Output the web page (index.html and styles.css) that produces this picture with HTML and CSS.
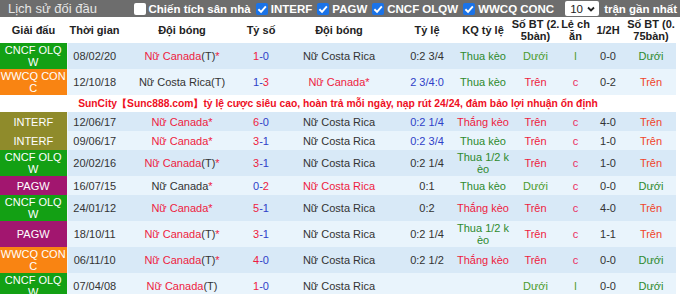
FILE: index.html
```html
<!DOCTYPE html>
<html lang="vi">
<head>
    <meta charset="UTF-8">
    <title>Lịch sử đối đầu</title>
    <link rel="stylesheet" href="styles.css">
</head>
<body>
    <div class="h2h">
        <!-- Title bar with filters -->
        <div class="title-bar">
            <span class="title">Lịch sử đối đầu</span>
            <div class="filters">
                <label class="filter"><span class="box"></span>Chiến tích sân nhà</label>
                <label class="filter"><span class="box checked"><svg viewBox="0 0 10 10"><path d="M2 5.2 L4.2 7.4 L8.2 2.8" /></svg></span>INTERF</label>
                <label class="filter"><span class="box checked"><svg viewBox="0 0 10 10"><path d="M2 5.2 L4.2 7.4 L8.2 2.8" /></svg></span>PAGW</label>
                <label class="filter"><span class="box checked"><svg viewBox="0 0 10 10"><path d="M2 5.2 L4.2 7.4 L8.2 2.8" /></svg></span>CNCF OLQW</label>
                <label class="filter"><span class="box checked"><svg viewBox="0 0 10 10"><path d="M2 5.2 L4.2 7.4 L8.2 2.8" /></svg></span>WWCQ CONC</label>
                <span class="select">10<svg viewBox="0 0 10 10"><path d="M2 3.5 L5 6.5 L8 3.5" /></svg></span>
                <span class="filter">trận gần nhất</span>
            </div>
        </div>

        <table class="matches">
            <colgroup>
                <col class="c-league">
                <col class="c-date">
                <col class="c-home">
                <col class="c-score">
                <col class="c-away">
                <col class="c-odds">
                <col class="c-result">
                <col class="c-goals">
                <col class="c-oe">
                <col class="c-half">
                <col class="c-goals2">
            </colgroup>
            <thead>
                <tr>
                    <th>Giải đấu</th>
                    <th>Thời gian</th>
                    <th>Đội bóng</th>
                    <th>Tỷ số</th>
                    <th>Đội bóng</th>
                    <th>Tỷ lệ</th>
                    <th>KQ tỷ lệ</th>
                    <th>Số BT (2.5bàn)</th>
                    <th>Lẻ chẵn</th>
                    <th>1/2H</th>
                    <th>Số BT (0.75bàn)</th>
                </tr>
            </thead>
            <tbody>
                <tr class="row-a">
                    <td class="lg cncf">CNCF OLQW</td>
                    <td>08/02/20</td>
                    <td><span class="red">Nữ Canada</span>(T)<span class="red">*</span></td>
                    <td><span class="red">1</span><span class="blue">-0</span></td>
                    <td>Nữ Costa Rica</td>
                    <td>0:2 3/4</td>
                    <td class="green">Thua kèo</td>
                    <td class="lgreen">Dưới</td>
                    <td class="lgreen">l</td>
                    <td>0-0</td>
                    <td class="green">Dưới</td>
                </tr>
                <tr class="row-b">
                    <td class="lg wwcq">WWCQ CONC</td>
                    <td>12/10/18</td>
                    <td>Nữ Costa Rica(T)</td>
                    <td><span class="blue">1-</span><span class="red">3</span></td>
                    <td class="red">Nữ Canada*</td>
                    <td class="blue">2 3/4:0</td>
                    <td class="green">Thua kèo</td>
                    <td class="red">Trên</td>
                    <td class="pink">c</td>
                    <td>0-2</td>
                    <td class="orange">Trên</td>
                </tr>
                <tr class="promo">
                    <td colspan="11">SunCity【Sunc888.com】tỷ lệ cược siêu cao, hoàn trả mỗi ngày, nạp rút 24/24, đảm bảo lợi nhuận ổn định</td>
                </tr>
                <tr class="row-a">
                    <td class="lg interf">INTERF</td>
                    <td>12/06/17</td>
                    <td class="red">Nữ Canada*</td>
                    <td><span class="red">6</span><span class="blue">-0</span></td>
                    <td>Nữ Costa Rica</td>
                    <td class="blue">0:2 1/4</td>
                    <td class="red">Thắng kèo</td>
                    <td class="red">Trên</td>
                    <td class="pink">c</td>
                    <td>4-0</td>
                    <td class="orange">Trên</td>
                </tr>
                <tr class="row-b">
                    <td class="lg interf">INTERF</td>
                    <td>09/06/17</td>
                    <td class="red">Nữ Canada*</td>
                    <td><span class="red">3</span><span class="blue">-1</span></td>
                    <td>Nữ Costa Rica</td>
                    <td class="blue">0:2 3/4</td>
                    <td class="green">Thua kèo</td>
                    <td class="red">Trên</td>
                    <td class="pink">c</td>
                    <td>1-0</td>
                    <td class="orange">Trên</td>
                </tr>
                <tr class="row-a">
                    <td class="lg cncf">CNCF OLQW</td>
                    <td>20/02/16</td>
                    <td><span class="red">Nữ Canada</span>(T)<span class="red">*</span></td>
                    <td><span class="red">3</span><span class="blue">-1</span></td>
                    <td>Nữ Costa Rica</td>
                    <td>0:2 1/4</td>
                    <td class="green">Thua 1/2 kèo</td>
                    <td class="red">Trên</td>
                    <td class="pink">c</td>
                    <td>1-0</td>
                    <td class="orange">Trên</td>
                </tr>
                <tr class="row-b">
                    <td class="lg pagw">PAGW</td>
                    <td>16/07/15</td>
                    <td>Nữ Canada<span class="red">*</span></td>
                    <td><span class="blue">0-</span><span class="red">2</span></td>
                    <td class="red">Nữ Costa Rica</td>
                    <td>0:1</td>
                    <td class="green">Thua kèo</td>
                    <td class="lgreen">Dưới</td>
                    <td class="pink">c</td>
                    <td>0-0</td>
                    <td class="green">Dưới</td>
                </tr>
                <tr class="row-a">
                    <td class="lg cncf">CNCF OLQW</td>
                    <td>24/01/12</td>
                    <td class="red">Nữ Canada*</td>
                    <td><span class="red">5</span><span class="blue">-1</span></td>
                    <td>Nữ Costa Rica</td>
                    <td>0:2</td>
                    <td class="red">Thắng kèo</td>
                    <td class="red">Trên</td>
                    <td class="pink">c</td>
                    <td>4-0</td>
                    <td class="orange">Trên</td>
                </tr>
                <tr class="row-b">
                    <td class="lg pagw">PAGW</td>
                    <td>18/10/11</td>
                    <td><span class="red">Nữ Canada</span>(T)<span class="red">*</span></td>
                    <td><span class="red">3</span><span class="blue">-1</span></td>
                    <td>Nữ Costa Rica</td>
                    <td>0:2 1/4</td>
                    <td class="green">Thua 1/2 kèo</td>
                    <td class="red">Trên</td>
                    <td class="pink">c</td>
                    <td>1-1</td>
                    <td class="orange">Trên</td>
                </tr>
                <tr class="row-a">
                    <td class="lg wwcq">WWCQ CONC</td>
                    <td>06/11/10</td>
                    <td><span class="red">Nữ Canada</span>(T)<span class="red">*</span></td>
                    <td><span class="red">4</span><span class="blue">-0</span></td>
                    <td>Nữ Costa Rica</td>
                    <td>0:2 1/2</td>
                    <td class="red">Thắng kèo</td>
                    <td class="red">Trên</td>
                    <td class="pink">c</td>
                    <td>0-0</td>
                    <td class="green">Dưới</td>
                </tr>
                <tr class="row-b">
                    <td class="lg cncf">CNCF OLQW</td>
                    <td>07/04/08</td>
                    <td><span class="red">Nữ Canada</span>(T)</td>
                    <td><span class="red">1</span><span class="blue">-0</span></td>
                    <td>Nữ Costa Rica</td>
                    <td></td>
                    <td></td>
                    <td class="lgreen">Dưới</td>
                    <td class="lgreen">l</td>
                    <td>0-0</td>
                    <td class="green">Dưới</td>
                </tr>
            </tbody>
        </table>
    </div>
</body>
</html>
```

FILE: styles.css
```css
* {
    margin: 0;
    padding: 0;
    box-sizing: border-box;
}

body {
    font-family: "Liberation Sans", Arial, sans-serif;
    font-size: 11px;
    color: #333;
    background: #fff;
    width: 680px;
    overflow: hidden;
}

/* Title bar */
.title-bar {
    display: flex;
    align-items: center;
    justify-content: space-between;
    height: 17px;
    background-color: #6d6d6d;
    padding: 0 3px 0 8px;
}

.title {
    font-size: 13px;
    color: #e6e6e6;
}

.filters {
    display: flex;
    align-items: center;
    gap: 5px;
}

.filter {
    display: flex;
    align-items: center;
    gap: 3px;
    font-size: 11.5px;
    font-weight: bold;
    color: #fff;
}

.box {
    display: inline-block;
    width: 12px;
    height: 12px;
    background: #fff;
    border-radius: 2px;
}

.box.checked {
    background: #1a73e8;
}

.box svg {
    display: block;
    width: 12px;
    height: 12px;
    fill: none;
    stroke: #fff;
    stroke-width: 1.6;
}

.select {
    display: flex;
    align-items: center;
    justify-content: space-between;
    width: 34px;
    height: 15px;
    margin-left: 6px;
    padding: 0 3px 0 5px;
    background: #fff;
    border-radius: 2px;
    font-size: 11.5px;
    color: #222;
}

.select svg {
    width: 10px;
    height: 10px;
    fill: none;
    stroke: #222;
    stroke-width: 1.8;
}

/* Match table */
.matches {
    width: 676px;
    table-layout: fixed;
    border-collapse: collapse;
}

.c-league { width: 67px; }
.c-date { width: 55px; }
.c-home { width: 120px; }
.c-score { width: 38px; }
.c-away { width: 118px; }
.c-odds { width: 58px; }
.c-result { width: 54px; }
.c-goals { width: 51px; }
.c-oe { width: 29px; }
.c-half { width: 36px; }
.c-goals2 { width: 50px; }

.matches th,
.matches td {
    text-align: center;
    vertical-align: middle;
    line-height: 12px;
    word-break: break-all;
    padding: 1px 0;
}

.matches th {
    height: 25px;
    font-weight: bold;
    color: #222;
    background: #fff;
}

.matches td {
    height: 19px;
}

.row-a td {
    background-color: #d8e9f7;
}

.row-b td {
    background-color: #e9f4fc;
}

.matches td.lg {
    color: #fff;
    border-right: 1px solid #eef5fb;
}

.matches td.cncf { background-color: #13a014; }
.matches td.wwcq { background-color: #f98412; }
.matches td.interf { background-color: #8f8b2b; }
.matches td.pagw { background-color: #a2166f; }

.matches .promo td {
    height: 17px;
    font-size: 10.3px;
    font-weight: bold;
    color: #ee0f1f;
    background: #fff;
    padding: 0;
}

.red { color: #ee1c3f; }
.blue { color: #2f3fc8; }
.green { color: #2e8a2e; }
.lgreen { color: #4c9a2a; }
.pink { color: #ea2f62; }
.orange { color: #f0452a; }
```
